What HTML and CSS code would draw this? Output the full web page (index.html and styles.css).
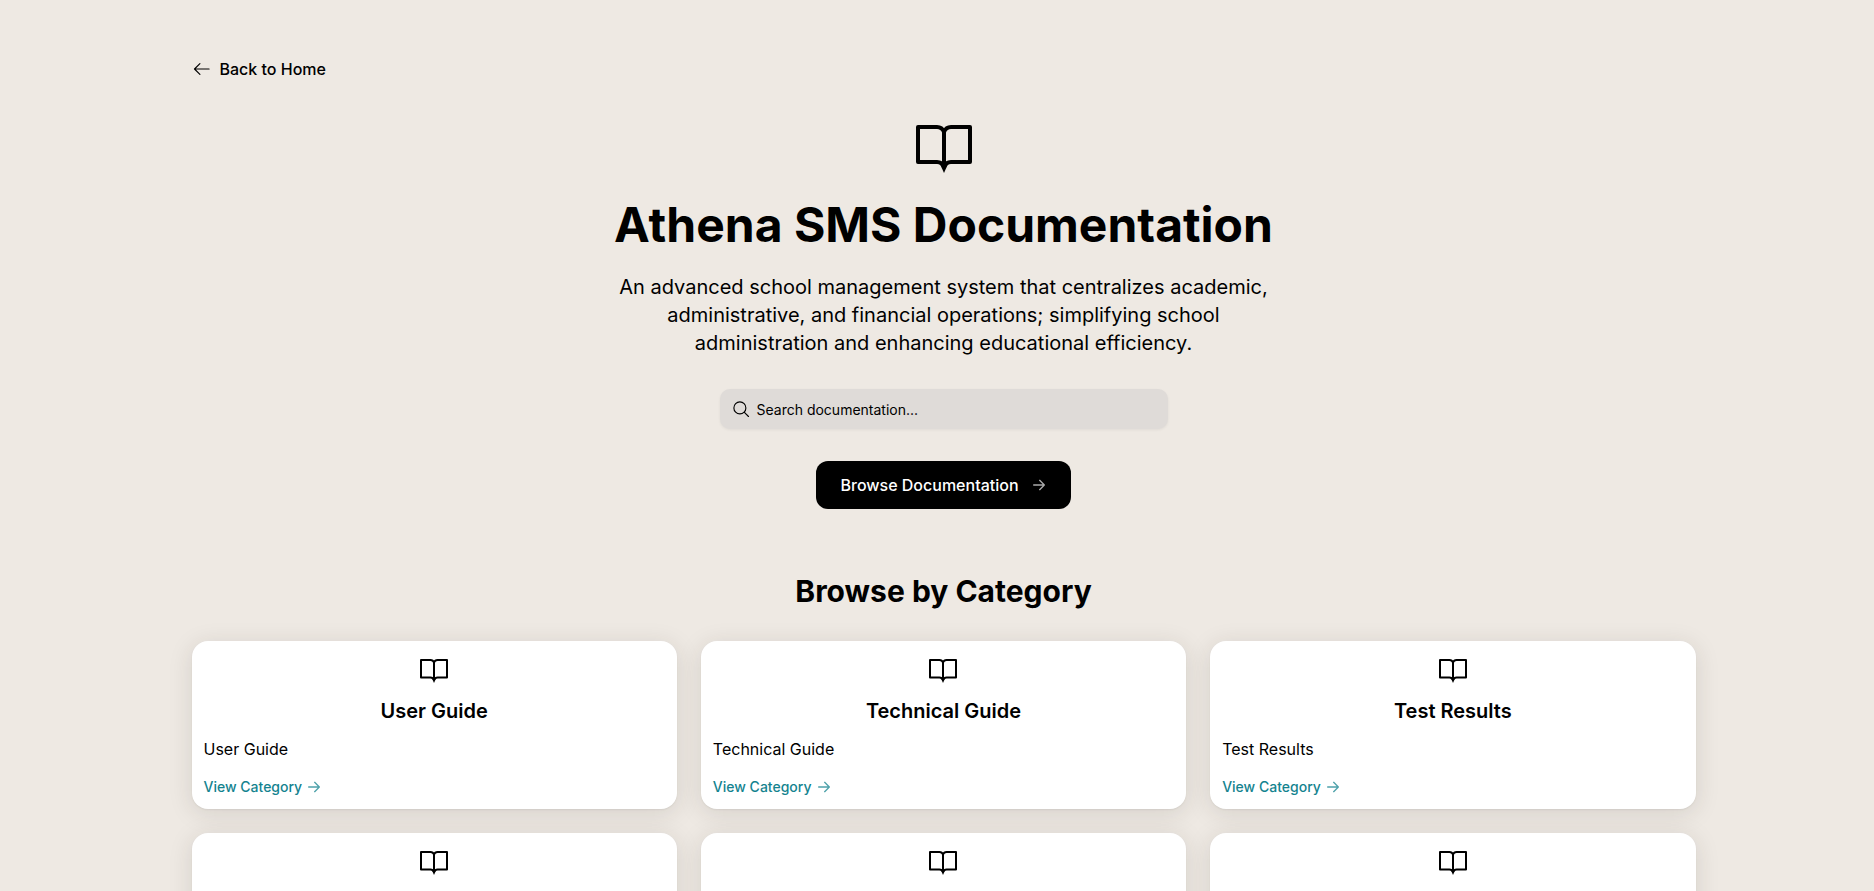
FILE: index.html
```html
<!DOCTYPE html>
<html lang="en">
<head>
<meta charset="utf-8"/>
<title>Athena SMS Documentation</title>
<link rel="stylesheet" href="styles.css">
</head>
<body>
<svg class="defs" width="0" height="0">
  <symbol id="book" viewBox="0 0 56 48">
    <path d="M2 2H21Q26 2 28 7Q30 2 35 2H54V37H35Q30 37 28 42Q26 37 21 37H2ZM28 7V42" fill="none" stroke="currentColor" stroke-width="4" stroke-linejoin="round"/>
    <path d="M24 39H32L28 48Z" fill="currentColor"/>
  </symbol>
  <symbol id="arrow" viewBox="0 0 24 24">
    <path d="M4 12H20M13 5L20 12L13 19" fill="none" stroke="currentColor" stroke-width="2" stroke-linecap="round" stroke-linejoin="round"/>
  </symbol>
</svg>
<main class="page">
  <a class="back-link" href="#">
    <svg class="back-icon" viewBox="0 0 24 24"><path d="M20.5 12H3M9.5 5.5L3 12L9.5 18.5" fill="none" stroke="currentColor" stroke-width="1.4" stroke-linecap="round" stroke-linejoin="round"/></svg>
    Back to Home
  </a>
  <section class="hero">
    <svg class="hero-icon"><use href="#book"/></svg>
    <h1>Athena SMS Documentation</h1>
    <p class="intro">An advanced school management system that centralizes academic, administrative, and financial operations; simplifying school administration and enhancing educational efficiency.</p>
    <div class="search">
      <svg class="search-icon" viewBox="0 0 24 24"><circle cx="10.5" cy="10.5" r="8" fill="none" stroke="currentColor" stroke-width="1.5"/><path d="M16.5 16.5L22 22" stroke="currentColor" stroke-width="1.5" stroke-linecap="round"/></svg>
      <span>Search documentation...</span>
    </div>
    <a class="browse-btn" href="#">Browse Documentation <svg class="browse-arrow"><use href="#arrow"/></svg></a>
  </section>
  <h2>Browse by Category</h2>
  <div class="cards">
    <article class="card">
      <svg class="card-icon"><use href="#book"/></svg>
      <h3>User Guide</h3>
      <p>User Guide</p>
      <a class="card-link" href="#">View Category <svg class="link-arrow"><use href="#arrow"/></svg></a>
    </article>
    <article class="card">
      <svg class="card-icon"><use href="#book"/></svg>
      <h3>Technical Guide</h3>
      <p>Technical Guide</p>
      <a class="card-link" href="#">View Category <svg class="link-arrow"><use href="#arrow"/></svg></a>
    </article>
    <article class="card">
      <svg class="card-icon"><use href="#book"/></svg>
      <h3>Test Results</h3>
      <p>Test Results</p>
      <a class="card-link" href="#">View Category <svg class="link-arrow"><use href="#arrow"/></svg></a>
    </article>
    <article class="card">
      <svg class="card-icon"><use href="#book"/></svg>
    </article>
    <article class="card">
      <svg class="card-icon"><use href="#book"/></svg>
    </article>
    <article class="card">
      <svg class="card-icon"><use href="#book"/></svg>
    </article>
  </div>
</main>
</body>
</html>
```

FILE: styles.css
```css
html, body { height: 891px; overflow: hidden; }
body { background-color: #eee9e3; color: #000; font-family: "Inter", sans-serif; margin: 0; padding: 0; }
.defs { position: absolute; }
a { color: inherit; text-decoration: none; }

.page { width: 1504px; margin-left: 191.5px; padding-top: 57px; }
.back-link { display: flex; align-items: center; gap: 8px; height: 24px; font-size: 16px; font-weight: 500; }
.back-icon { width: 20px; height: 20px; }

.hero { display: flex; flex-direction: column; align-items: center; text-align: center; margin-top: 44px; }
.hero-icon { width: 56px; height: 48px; }
h1 { font-size: 48px; line-height: 48px; font-weight: 700; margin: 28px 0 0; }
.intro { width: 672px; font-size: 20px; line-height: 28px; margin: 24px 0 0; }
.search { display: flex; align-items: center; gap: 7px; box-sizing: border-box; width: 448px; height: 40px; margin-top: 32px; padding: 0 12px; background-color: #dfdbd8; border-radius: 10px; font-size: 14px; box-shadow: 0 1px 3px rgba(0,0,0,.06); }
.search-icon { width: 18px; height: 18px; }
.browse-btn { display: flex; align-items: center; gap: 12px; height: 48px; margin-top: 32px; padding: 0 24px; background-color: #000; color: #fff; border-radius: 12px; font-size: 16px; font-weight: 500; }
.browse-arrow { width: 16px; height: 16px; color: #aaa; }

h2 { font-size: 30px; line-height: 36px; font-weight: 700; text-align: center; margin: 64px 0 0; }
.cards { display: grid; grid-template-columns: repeat(3, 1fr); gap: 24px; margin-top: 32px; }
.card { background-color: #fff; border-radius: 16px; padding: 18px 12px 12px; height: 168px; box-sizing: border-box; box-shadow: 0 4px 24px rgba(50,40,30,.13), 0 1px 2px rgba(0,0,0,.06); display: flex; flex-direction: column; }
.card-icon { width: 28px; height: 24px; flex: none; align-self: center; }
h3 { font-size: 20px; line-height: 28px; font-weight: 600; text-align: center; margin: 14px 0 0; }
.card p { font-size: 16px; line-height: 24px; margin: 12px 0 0; }
.card-link { display: flex; align-items: center; gap: 4px; font-size: 14px; font-weight: 500; color: #14838f; margin-top: 17px; }
.link-arrow { width: 16px; height: 16px; opacity: .75; }
```
